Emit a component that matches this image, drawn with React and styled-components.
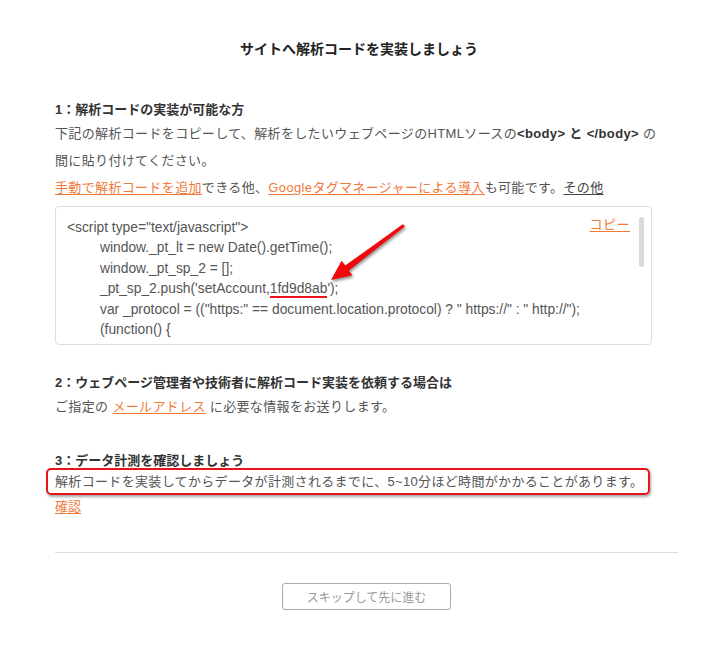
import React from "react";
import styled, { createGlobalStyle } from "styled-components";

const GlobalStyle = createGlobalStyle`
  html, body {
    margin: 0;
    padding: 0;
    background: #fff;
  }
  body {
    font-family: "Liberation Sans", "Noto Sans CJK JP", sans-serif;
    color: #555;
  }
`;

const orange = "#ef7a3c";

export const Page = styled.div`
  width: 718px;
  height: 650px;
  overflow: hidden;
`;

export const Title = styled.h1`
  margin: 39px 0 0;
  font-size: 14px;
  line-height: 20px;
  font-weight: bold;
  color: #222;
  text-align: center;
`;

export const Content = styled.div`
  width: 623px;
  margin: 41px 0 0 55px;
`;

export const StepHeading = styled.h2`
  margin: ${(p) => p.$top || 0}px 0 0;
  font-size: 13px;
  line-height: ${(p) => p.$lh || 20}px;
  font-weight: bold;
  color: #333;
`;

export const Text = styled.p`
  margin: 0;
  font-size: 13px;
  line-height: 27px;
  letter-spacing: 0.35px;
  color: #555;

  b {
    color: #333;
  }
`;

export const Link = styled.a`
  color: ${(p) => (p.$dark ? "#444" : orange)};
  text-decoration: underline;
  text-underline-offset: 2px;
  cursor: pointer;
`;

export const CodeBox = styled.div`
  position: relative;
  box-sizing: border-box;
  width: 597px;
  height: 139px;
  margin-top: 5px;
  padding: 11px 60px 0 11px;
  border: 1px solid #ddd;
  border-radius: 4px;
  overflow: hidden;
`;

export const CodeLine = styled.div`
  font-family: "Liberation Sans", "Noto Sans CJK JP", sans-serif;
  font-size: 13.8px;
  line-height: 20.4px;
  color: #555;
  white-space: nowrap;
  padding-left: ${(p) => (p.$indent || 0) * 33}px;
`;

export const Marked = styled.span`
  border-bottom: 2px solid #e8141a;
`;

export const CopyLink = styled(Link)`
  position: absolute;
  top: 10px;
  right: 21px;
  font-size: 13px;
  line-height: 16px;
  letter-spacing: 0.5px;
`;

export const ScrollThumb = styled.div`
  position: absolute;
  top: 10px;
  right: 7px;
  width: 5px;
  height: 50px;
  border-radius: 3px;
  background: #d9d9d9;
`;

export const ArrowLayer = styled.svg`
  position: absolute;
  left: -1px;
  top: -1px;
  width: 597px;
  height: 139px;
  overflow: visible;
  filter: drop-shadow(1px 2px 1.5px rgba(0, 0, 0, 0.45));
  pointer-events: none;
`;

export const Highlight = styled.div`
  display: inline-block;
  margin: -1px 0 0 -9px;
  padding: 0 5px 0 7px;
  border: 2px solid #e8141a;
  border-radius: 5px;
  box-shadow: 1px 2px 3px rgba(0, 0, 0, 0.35);
  font-size: 13px;
  line-height: 23px;
  letter-spacing: 0.33px;
  color: #555;
  white-space: nowrap;
`;

export const ConfirmRow = styled.div`
  font-size: 13px;
  line-height: 24px;
`;

export const Divider = styled.hr`
  margin: 33px 0 0;
  border: 0;
  border-top: 1px solid #ddd;
`;

export const Footer = styled.div`
  display: flex;
  justify-content: center;
  margin-top: 30px;
`;

export const SkipButton = styled.button`
  width: 169px;
  height: 27px;
  padding: 0;
  background: #fff;
  border: 1px solid #aaa;
  border-radius: 3px;
  font-family: "Liberation Sans", "Noto Sans CJK JP", sans-serif;
  font-size: 12px;
  color: #999;
  cursor: pointer;
`;

const codeLines = [
  { indent: 0, text: '<script type="text/javascript">' },
  { indent: 1, text: "window._pt_lt = new Date().getTime();" },
  { indent: 1, text: "window._pt_sp_2 = [];" },
  { indent: 1, mark: true },
  {
    indent: 1,
    text: 'var _protocol = (("https:" == document.location.protocol) ? " https://" : " http://");',
  },
  { indent: 1, text: "(function() {" },
];

const RedArrow = () => (
  <ArrowLayer viewBox="0 0 597 139">
    <polygon
      fill="#f2070d"
      points="348.9,21.2 293.8,64.4 297.4,69.2 276,74 286.6,54.8 290.2,59.6 347.1,18.8"
    />
    <circle cx="348" cy="20" r="1.5" fill="#f2070d" />
  </ArrowLayer>
);

const App = () => {
  return (
    <Page>
      <GlobalStyle />
      <Title>サイトへ解析コードを実装しましょう</Title>
      <Content>
        <StepHeading>1：解析コードの実装が可能な方</StepHeading>
        <Text>
          下記の解析コードをコピーして、解析をしたいウェブページのHTMLソースの
          <b>&lt;body&gt; と &lt;/body&gt;</b> の<br />
          間に貼り付けてください。
          <br />
          <Link>手動で解析コードを追加</Link>できる他、
          <Link>Googleタグマネージャーによる導入</Link>も可能です。
          <Link $dark>その他</Link>
        </Text>

        <CodeBox>
          {codeLines.map((line, i) => (
            <CodeLine key={i} $indent={line.indent}>
              {line.mark ? (
                <>
                  _pt_sp_2.push('setAccount,<Marked>1fd9d8ab</Marked>');
                </>
              ) : (
                line.text
              )}
            </CodeLine>
          ))}
          <CopyLink>コピー</CopyLink>
          <ScrollThumb />
          <RedArrow />
        </CodeBox>

        <StepHeading $top={28}>
          2：ウェブページ管理者や技術者に解析コード実装を依頼する場合は
        </StepHeading>
        <Text>
          ご指定の <Link>メールアドレス</Link> に必要な情報をお送りします。
        </Text>

        <StepHeading $top={33} $lh={16}>
          3：データ計測を確認しましょう
        </StepHeading>
        <Highlight>
          解析コードを実装してからデータが計測されるまでに、5~10分ほど時間がかかることがあります。
        </Highlight>
        <ConfirmRow>
          <Link>確認</Link>
        </ConfirmRow>

        <Divider />
        <Footer>
          <SkipButton>スキップして先に進む</SkipButton>
        </Footer>
      </Content>
    </Page>
  );
};

export default App;
